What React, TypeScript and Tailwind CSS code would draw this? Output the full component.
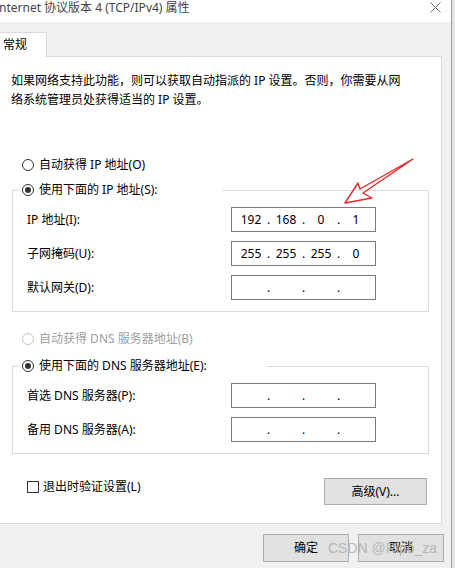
const font = "font-['Noto_Sans','Noto_Sans_CJK_SC',sans-serif]";

function Radio({ checked, disabled }: { checked?: boolean; disabled?: boolean }) {
  return (
    <span
      className={`w-[12px] h-[12px] rounded-full border bg-white flex items-center justify-center shrink-0 ${
        disabled ? "border-[#c4c4c4]" : "border-[#333333]"
      }`}
    >
      {checked && <span className="w-[6px] h-[6px] rounded-full bg-[#333333]" />}
    </span>
  );
}

function IpBox({ values }: { values: string[] }) {
  return (
    <div className="w-[145px] h-[25px] border border-[#7a7a7a] bg-white flex items-center pl-[4px] text-[12px] text-black">
      {values.map((v, i) => (
        <div key={i} className="flex items-center">
          <span className="w-[30px] text-center">{v}</span>
          {i < 3 && <span className="w-[5px] text-center">.</span>}
        </div>
      ))}
    </div>
  );
}

function Row({ label, values }: { label: string; values: string[] }) {
  return (
    <div className="flex items-center h-[25px]">
      <span className="pl-[14px] text-[12px] text-black">{label}</span>
      <div className="ml-auto mr-[52px]">
        <IpBox values={values} />
      </div>
    </div>
  );
}

function Btn({ children, className }: { children: React.ReactNode; className?: string }) {
  return (
    <div
      className={`h-[27px] bg-[#e1e1e1] border border-[#adadad] flex items-center justify-center text-[12px] text-black ${className ?? ""}`}
    >
      {children}
    </div>
  );
}

export default function App() {
  const empty = ["", "", "", ""];
  return (
    <div className={`relative w-[455px] h-[568px] bg-[#f0f0f0] flex overflow-hidden ${font}`}>
      <div className="w-[451px] flex flex-col">
        {/* title bar */}
        <div className="h-[22px] bg-white flex items-center justify-between">
          <span className="text-[12px] text-[#444] leading-none pb-[6px] -ml-[1px]">nternet 协议版本 4 (TCP/IPv4) 属性</span>
          <svg width="11" height="11" viewBox="0 0 11 11" className="mr-[10px] mb-[8px]">
            <path d="M0.5 0.5 L10.5 10.5 M10.5 0.5 L0.5 10.5" stroke="#6e6e6e" strokeWidth="1" />
          </svg>
        </div>

        {/* tabs */}
        <div className="h-[34px] relative">
          <div className="absolute left-0 top-[10px] w-[47px] h-[25px] bg-white border-t border-r border-[#d9d9d9] z-10 pl-[3px] flex items-center text-[12px] text-black">
            常规
          </div>
        </div>

        {/* panel */}
        <div className="w-[442px] h-[468px] bg-white border-t border-r border-b border-[#d9d9d9] flex flex-col text-[12px] text-black">
          <p className="pl-[11px] pt-[14px] leading-[19px]">
            如果网络支持此功能，则可以获取自动指派的 IP 设置。否则，你需要从网
            <br />
            络系统管理员处获得适当的 IP 设置。
          </p>

          <div className="mt-[46px] h-[19px] flex items-center gap-[5px] pl-[22px]">
            <Radio />
            <span>自动获得 IP 地址(O)</span>
          </div>

          <fieldset className="mx-[12px] mt-[6px] border border-[#dcdcdc] pb-[11px]">
            <legend className="ml-[7px] w-[202px] h-[20px] flex items-center gap-[5px] pl-[2px] bg-white">
              <Radio checked />
              <span>使用下面的 IP 地址(S):</span>
            </legend>
            <div className="mt-[7px] flex flex-col gap-[9px]">
              <Row label="IP 地址(I):" values={["192", "168", "0", "1"]} />
              <Row label="子网掩码(U):" values={["255", "255", "255", "0"]} />
              <Row label="默认网关(D):" values={empty} />
            </div>
          </fieldset>

          <div className="mt-[17px] h-[19px] flex items-center gap-[5px] pl-[22px] text-[#a0a0a0]">
            <Radio disabled />
            <span>自动获得 DNS 服务器地址(B)</span>
          </div>

          <fieldset className="mx-[12px] mt-[8px] border border-[#dcdcdc] pb-[11px]">
            <legend className="ml-[7px] w-[247px] h-[20px] flex items-center gap-[5px] pl-[2px] bg-white">
              <Radio checked />
              <span>使用下面的 DNS 服务器地址(E):</span>
            </legend>
            <div className="mt-[7px] flex flex-col gap-[9px]">
              <Row label="首选 DNS 服务器(P):" values={empty} />
              <Row label="备用 DNS 服务器(A):" values={empty} />
            </div>
          </fieldset>

          <div className="mt-[24px] flex items-start">
            <div className="mt-[3px] ml-[27px] flex items-center gap-[4px]">
              <span className="w-[12px] h-[12px] border border-[#333333] bg-white" />
              <span className="leading-[12px]">退出时验证设置(L)</span>
            </div>
            <Btn className="ml-auto mr-[14px] w-[103px]">高级(V)...</Btn>
          </div>
        </div>

        {/* bottom buttons */}
        <div className="mt-[10px] flex justify-end gap-[9px] mr-[7px]">
          <Btn className="w-[86px] h-[28px]">确定</Btn>
          <Btn className="w-[86px] h-[28px]">取消</Btn>
        </div>
      </div>

      {/* window edge */}
      <div className="w-[4px] h-full border-l border-[#9a9a9a] bg-[#e4e4e4]" />

      {/* annotation arrow */}
      <svg className="absolute left-0 top-0 pointer-events-none" width="455" height="568" viewBox="0 0 455 568">
        <polygon
          points="345,203 358,183 360,189 413,159 363,193 372,198"
          fill="none"
          stroke="#e8262b"
          strokeWidth="1.4"
          strokeLinejoin="round"
        />
      </svg>

      {/* watermark */}
      <span className="absolute left-[328px] top-[540px] whitespace-nowrap text-[14px] leading-[17px] text-[#b0b0b0]/90 font-['Liberation_Sans',sans-serif]">
        CSDN @Ripo_za
      </span>
    </div>
  );
}
